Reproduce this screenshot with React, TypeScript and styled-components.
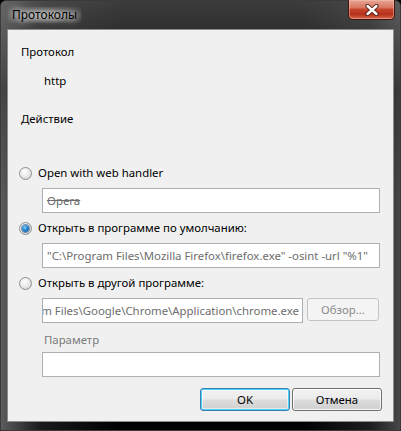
import React from "react";
import styled, { createGlobalStyle } from "styled-components";

const Global = createGlobalStyle`
  html, body { margin: 0; padding: 0; background: #000; }
  body { font-family: "Segoe UI", "Noto Sans", sans-serif; font-size: 11.4px; }
`;

const Window = styled.div`
  width: 401px;
  height: 431px;
  box-sizing: border-box;
  display: flex;
  flex-direction: column;
  background:
    linear-gradient(180deg, rgba(110, 110, 110, 0.55) 0px, rgba(40, 40, 40, 0.4) 90px, rgba(0, 0, 0, 0) 200px),
    linear-gradient(90deg, #5c5c5c 0px, #1a1a1a 40px, #000 120px, #000 300px, #1e1e1e 370px, #4a4a4a 401px);
  border: 1px solid #3a3a3a;
  border-radius: 6px 6px 0 0;
  padding: 0 6px 8px 6px;
`;

const TitleBar = styled.div`
  height: 28px;
  display: flex;
  align-items: flex-start;
  justify-content: space-between;
`;

const Title = styled.div`
  margin-top: 6px;
  margin-left: 1px;
  color: #000;
  font-size: 12px;
  line-height: 16px;
  padding: 0 4px;
  text-shadow: 0 0 6px rgba(255, 255, 255, 0.9), 0 0 10px rgba(255, 255, 255, 0.6);
  background: radial-gradient(ellipse at center, rgba(200, 200, 200, 0.55) 20%, rgba(160, 160, 160, 0.2) 65%, rgba(160, 160, 160, 0) 100%);
`;

const CloseButton = styled.div`
  width: 45px;
  height: 19px;
  margin-top: -1px;
  margin-right: -1px;
  border: 1px solid #3b1710;
  border-top: none;
  border-radius: 0 0 5px 5px;
  background: linear-gradient(180deg, #e7a596 0%, #d9785f 40%, #c4432a 50%, #b5321a 75%, #d8684a 100%);
  box-shadow: inset 0 0 0 1px rgba(255, 200, 190, 0.45);
  display: flex;
  align-items: center;
  justify-content: center;
`;

const Client = styled.div`
  flex: 1;
  border: 1px solid #8c8c8c;
  background: #f0f0f0;
  color: #000;
  display: flex;
  flex-direction: column;
  padding: 0 13px 0 13px;
`;

const Label = styled.div<{ $top: number; $indent?: number; $disabled?: boolean }>`
  margin-top: ${(p) => p.$top}px;
  margin-left: ${(p) => p.$indent ?? 0}px;
  line-height: 16px;
  color: ${(p) => (p.$disabled ? "#7a7a7a" : "#000")};
`;

const RadioRow = styled.div<{ $top: number }>`
  margin-top: ${(p) => p.$top}px;
  display: flex;
  align-items: center;
  gap: 6px;
  line-height: 16px;
  margin-left: -2px;
`;

const RadioCircle = styled.div<{ $checked?: boolean }>`
  width: 11px;
  height: 11px;
  border-radius: 50%;
  border: 1px solid #8e8f8f;
  background: radial-gradient(circle at 40% 35%, #ffffff 0%, #e6e6e6 55%, #c8c8c8 100%);
  display: flex;
  align-items: center;
  justify-content: center;
  &::after {
    content: "";
    display: ${(p) => (p.$checked ? "block" : "none")};
    width: 7px;
    height: 7px;
    border-radius: 50%;
    background: radial-gradient(circle at 40% 35%, #8fd0f5 0%, #2a8ad4 40%, #0d4d8a 100%);
    box-shadow: 0 0 0 1px rgba(40, 80, 120, 0.6);
  }
`;

const Field = styled.div<{ $top: number; $dim?: boolean; $strike?: boolean; $tail?: boolean }>`
  margin-top: ${(p) => p.$top}px;
  margin-left: 21px;
  height: 23px;
  min-width: 0;
  background: #fff;
  border: 1px solid #acb0b5;
  display: flex;
  align-items: center;
  justify-content: ${(p) => (p.$tail ? "flex-end" : "flex-start")};
  overflow: hidden;
  white-space: nowrap;
  padding: 0 3px 0 4px;
  color: ${(p) => (p.$dim ? "#6d6d6d" : "#404040")};
  text-decoration: ${(p) => (p.$strike ? "line-through" : "none")};
  & > span {
    flex-shrink: 0;
  }
`;

const FieldRow = styled.div<{ $top: number }>`
  margin-top: ${(p) => p.$top}px;
  display: flex;
  align-items: stretch;
  gap: 4px;
  margin-right: 1px;
  & > ${Field} {
    margin-top: 0;
    flex: 1;
  }
`;

const Button = styled.div<{ $variant?: "default" | "disabled" }>`
  width: ${(p) => (p.$variant === "disabled" ? "70px" : "88px")};
  height: 21px;
  border-radius: 3px;
  display: flex;
  align-items: center;
  justify-content: center;
  color: ${(p) => (p.$variant === "disabled" ? "#8a8a8a" : "#000")};
  border: 1px solid
    ${(p) => (p.$variant === "default" ? "#3c7fb1" : p.$variant === "disabled" ? "#c2c4c6" : "#707070")};
  background: ${(p) =>
    p.$variant === "disabled"
      ? "#f4f4f4"
      : "linear-gradient(180deg, #f2f2f2 0%, #ebebeb 48%, #dddddd 52%, #cfcfcf 100%)"};
  box-shadow: ${(p) =>
    p.$variant === "default"
      ? "inset 0 0 0 1px #48d2f8, inset 0 0 0 2px rgba(255,255,255,0.5)"
      : p.$variant === "disabled"
      ? "none"
      : "inset 0 0 0 1px rgba(255,255,255,0.8)"};
`;

const Footer = styled.div`
  margin-top: 11px;
  display: flex;
  justify-content: flex-end;
  gap: 2px;
  margin-right: -2px;
`;

const CloseGlyph: React.FC = () => (
  <svg width="14" height="12" viewBox="0 0 14 12">
    <path d="M2.5 2 L11.5 10 M11.5 2 L2.5 10" stroke="#4a1c14" strokeWidth="4.2" strokeLinecap="round" />
    <path d="M2.5 2 L11.5 10 M11.5 2 L2.5 10" stroke="#ffffff" strokeWidth="2.4" strokeLinecap="round" />
  </svg>
);

const App: React.FC = () => {
  return (
    <>
      <Global />
      <Window>
        <TitleBar>
          <Title>Протоколы</Title>
          <CloseButton>
            <CloseGlyph />
          </CloseButton>
        </TitleBar>
        <Client>
          <Label $top={14}>Протокол</Label>
          <Label $top={13} $indent={23}>http</Label>
          <Label $top={22}>Действие</Label>

          <RadioRow $top={38}>
            <RadioCircle />
            <span>Open with web handler</span>
          </RadioRow>
          <Field $top={7} $dim $strike>
            <span>Opera</span>
          </Field>

          <RadioRow $top={7}>
            <RadioCircle $checked />
            <span>Открыть в программе по умолчанию:</span>
          </RadioRow>
          <Field $top={7} $dim>
            <span>"C:\Program Files\Mozilla Firefox\firefox.exe" -osint -url "%1"</span>
          </Field>

          <RadioRow $top={7}>
            <RadioCircle />
            <span>Открыть в другой программе:</span>
          </RadioRow>
          <FieldRow $top={7}>
            <Field $top={0} $dim $tail>
              <span>C:\Program Files\Google\Chrome\Application\chrome.exe</span>
            </Field>
            <Button $variant="disabled">Обзор...</Button>
          </FieldRow>

          <Label $top={9} $indent={23} $disabled>Параметр</Label>
          <Field $top={4} />

          <Footer>
            <Button $variant="default">OK</Button>
            <Button>Отмена</Button>
          </Footer>
        </Client>
      </Window>
    </>
  );
};

export default App;
